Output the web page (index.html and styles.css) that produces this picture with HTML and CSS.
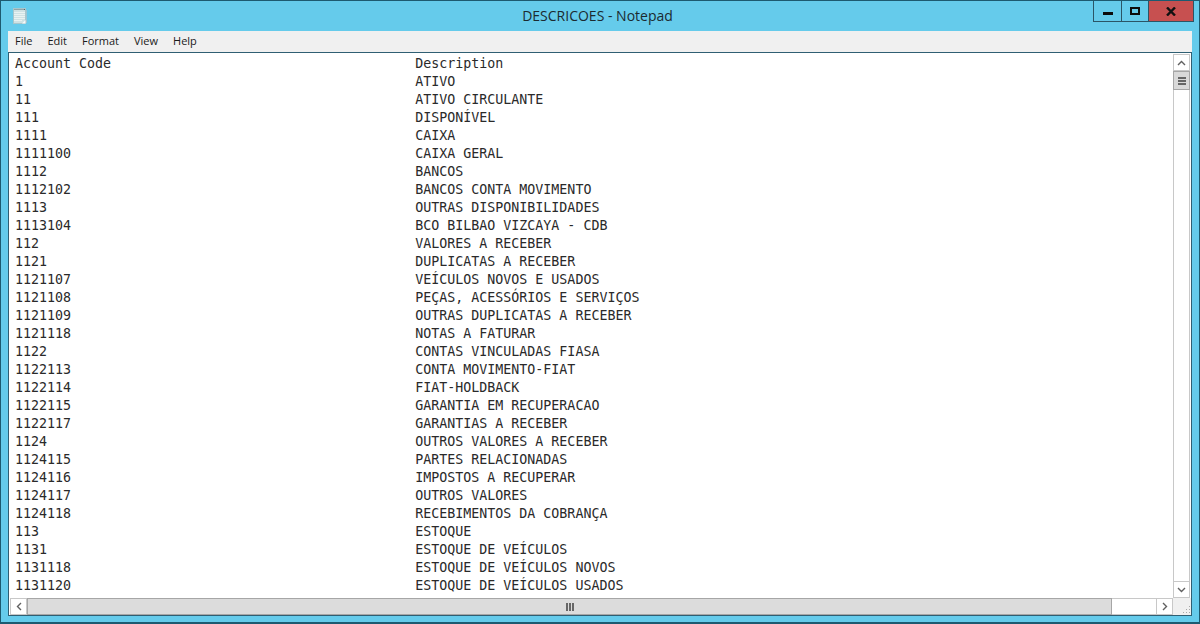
FILE: index.html
```html
<!DOCTYPE html>
<html lang="en">
<head>
    <meta charset="UTF-8">
    <title>DESCRICOES - Notepad</title>
    <link rel="stylesheet" href="styles.css">
</head>
<body>
    <div class="window">
        <div class="titlebar">
            <svg class="app-icon" width="14" height="17" viewBox="0 0 14 17">
                <rect x="0.5" y="1.5" width="12" height="15" fill="#cfe2e4" stroke="#a8c6cc"/>
                <path d="M9 16.5 12.5 13V16.5z" fill="#f8fafa"/>
                <path d="M1 5.5h11M1 7.5h11M1 9.5h11M1 11.5h11M1 13.5h8" stroke="#e9f2f2"/>
                <path d="M1.5 2.5h1M3.5 2.5h1M5.5 2.5h1M7.5 2.5h1M9.5 2.5h1M11 2.5h1" stroke="#56686e"/>
                <path d="M13.5 3v13" stroke="#9cc4d4"/>
            </svg>
            <div class="title">DESCRICOES - Notepad</div>
            <div class="controls">
                <div class="ctl ctl-min"><span class="min-glyph"></span></div>
                <div class="ctl ctl-max"><span class="max-glyph"></span></div>
                <div class="ctl ctl-close">
                    <svg width="10" height="9" viewBox="0 0 10 9"><path d="M1 .5 9 8.5M9 .5 1 8.5" stroke="#111" stroke-width="2.4" fill="none"/></svg>
                </div>
            </div>
        </div>
        <div class="menubar">
            <span>File</span>
            <span>Edit</span>
            <span>Format</span>
            <span>View</span>
            <span>Help</span>
        </div>
        <div class="client">
            <div class="main-row">
                <pre class="text">Account Code                                      Description
1                                                 ATIVO
11                                                ATIVO CIRCULANTE
111                                               DISPONÍVEL
1111                                              CAIXA
1111100                                           CAIXA GERAL
1112                                              BANCOS
1112102                                           BANCOS CONTA MOVIMENTO
1113                                              OUTRAS DISPONIBILIDADES
1113104                                           BCO BILBAO VIZCAYA - CDB
112                                               VALORES A RECEBER
1121                                              DUPLICATAS A RECEBER
1121107                                           VEÍCULOS NOVOS E USADOS
1121108                                           PEÇAS, ACESSÓRIOS E SERVIÇOS
1121109                                           OUTRAS DUPLICATAS A RECEBER
1121118                                           NOTAS A FATURAR
1122                                              CONTAS VINCULADAS FIASA
1122113                                           CONTA MOVIMENTO-FIAT
1122114                                           FIAT-HOLDBACK
1122115                                           GARANTIA EM RECUPERACAO
1122117                                           GARANTIAS A RECEBER
1124                                              OUTROS VALORES A RECEBER
1124115                                           PARTES RELACIONADAS
1124116                                           IMPOSTOS A RECUPERAR
1124117                                           OUTROS VALORES
1124118                                           RECEBIMENTOS DA COBRANÇA
113                                               ESTOQUE
1131                                              ESTOQUE DE VEÍCULOS
1131118                                           ESTOQUE DE VEÍCULOS NOVOS
1131120                                           ESTOQUE DE VEÍCULOS USADOS</pre>
                <div class="vscroll">
                    <div class="sb-btn">
                        <svg width="9" height="6" viewBox="0 0 9 6"><path d="M1 5 4.5 1.5 8 5" stroke="#606060" stroke-width="1.4" fill="none"/></svg>
                    </div>
                    <div class="vthumb"><span></span><span></span><span></span></div>
                    <div class="sb-track"></div>
                    <div class="sb-btn">
                        <svg width="9" height="6" viewBox="0 0 9 6"><path d="M1 1 4.5 4.5 8 1" stroke="#606060" stroke-width="1.4" fill="none"/></svg>
                    </div>
                </div>
            </div>
            <div class="hscroll-row">
                <div class="hscroll">
                    <div class="sb-btn">
                        <svg width="6" height="9" viewBox="0 0 6 9"><path d="M5 1 1.5 4.5 5 8" stroke="#606060" stroke-width="1.4" fill="none"/></svg>
                    </div>
                    <div class="hthumb"><span></span><span></span><span></span></div>
                    <div class="sb-track"></div>
                    <div class="sb-btn">
                        <svg width="6" height="9" viewBox="0 0 6 9"><path d="M1 1 4.5 4.5 1 8" stroke="#606060" stroke-width="1.4" fill="none"/></svg>
                    </div>
                </div>
                <div class="corner">
                    <svg width="10" height="10" viewBox="0 0 10 10"><path d="M8 1h1v1H8zM5 4h1v1H5zM8 4h1v1H8zM2 7h1v1H2zM5 7h1v1H5zM8 7h1v1H8z" fill="#a8a8a8"/></svg>
                </div>
            </div>
        </div>
    </div>
</body>
</html>
```
FILE: styles.css
```css
* {
    margin: 0;
    padding: 0;
    box-sizing: border-box;
}

body {
    width: 1200px;
    height: 624px;
    overflow: hidden;
    background: #65cbeb;
    font-family: "Open Sans", "Noto Sans", sans-serif;
}

.window {
    height: 624px;
    display: flex;
    flex-direction: column;
    background: #65cbeb;
    border: 1px solid #1d5a70;
    border-bottom-width: 2px;
    padding: 0 7px 6px 7px;
}

.titlebar {
    height: 30px;
    display: flex;
    align-items: flex-start;
    flex-shrink: 0;
}

.app-icon {
    margin: 6px 0 0 5px;
}

.title {
    flex: 1;
    text-align: center;
    font-size: 14px;
    line-height: 30px;
    color: #1b2a30;
    padding-left: 75px;
}

.controls {
    display: flex;
    height: 21px;
    margin-right: -2px;
    border: 1px solid #2b5566;
    border-top: none;
}

.ctl {
    display: flex;
    align-items: center;
    justify-content: center;
    height: 20px;
}

.ctl-min {
    width: 28px;
    border-right: 1px solid #2b5566;
}

.ctl-max {
    width: 26px;
}

.ctl-close {
    width: 45px;
    background: #c75050;
    border-left: 1px solid #2b5566;
}

.min-glyph {
    width: 10px;
    height: 3px;
    margin-top: 5px;
    background: #0c0c0c;
}

.max-glyph {
    width: 10px;
    height: 8px;
    border: 2px solid #0c0c0c;
    border-top-width: 2px;
}

.menubar {
    height: 21px;
    flex-shrink: 0;
    display: flex;
    align-items: center;
    gap: 15px;
    padding: 0 0 2px 7px;
    background: #f0f0f0;
    font-size: 11px;
    color: #1a1a1a;
}

.client {
    flex: 1;
    min-height: 0;
    display: flex;
    flex-direction: column;
    background: #fff;
    border: 1px solid #2f5f73;
}

.main-row {
    flex: 1;
    min-height: 0;
    display: flex;
}

.text {
    flex: 1;
    overflow: hidden;
    padding: 2px 0 0 6px;
    font-family: "DejaVu Sans Mono", "Liberation Mono", monospace;
    font-size: 13.3px;
    line-height: 18px;
    color: #2a2a2a;
}

.vscroll {
    width: 19px;
    padding: 1px 1px 0 1px;
    display: flex;
    flex-direction: column;
    background: #fff;
}

.sb-btn {
    width: 17px;
    height: 17px;
    flex-shrink: 0;
    display: flex;
    align-items: center;
    justify-content: center;
    background: #fff;
    border: 1px solid #c8c8c8;
}

.sb-track {
    flex: 1;
    background: #fff;
    border-left: 1px solid #c8c8c8;
    border-right: 1px solid #c8c8c8;
}

.vthumb {
    height: 19px;
    flex-shrink: 0;
    display: flex;
    flex-direction: column;
    align-items: center;
    justify-content: center;
    gap: 1px;
    background: #d9d9d9;
    border: 1px solid #a6a6a6;
}

.vthumb span {
    width: 8px;
    height: 2px;
    background: #666;
}

.hscroll-row {
    height: 17px;
    flex-shrink: 0;
    display: flex;
}

.hscroll {
    flex: 1;
    display: flex;
    padding-left: 1px;
}

.hscroll .sb-track {
    border: 1px solid #c8c8c8;
    border-left: none;
    border-right: none;
}

.hthumb {
    width: 1085px;
    flex-shrink: 0;
    display: flex;
    align-items: center;
    justify-content: center;
    gap: 1px;
    background: #dcdcdc;
    border: 1px solid #a6a6a6;
}

.hthumb span {
    width: 2px;
    height: 8px;
    background: #666;
}

.corner {
    width: 18px;
    display: flex;
    align-items: flex-end;
    justify-content: flex-end;
    background: #f0f0f0;
}
```
